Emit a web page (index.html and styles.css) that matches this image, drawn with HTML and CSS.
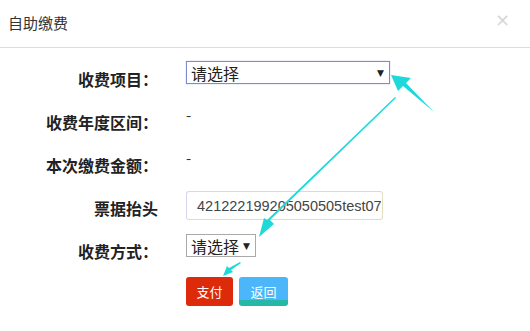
FILE: index.html
```html
<!DOCTYPE html>
<html lang="zh-CN">
<head>
    <meta charset="UTF-8">
    <title>自助缴费</title>
    <link rel="stylesheet" href="styles.css">
</head>
<body>
    <div class="dialog">
        <div class="dialog-header">
            <span class="dialog-title">自助缴费</span>
            <span class="dialog-close">&times;</span>
        </div>
        <div class="dialog-body">
            <div class="form-row">
                <label class="form-label">收费项目：</label>
                <div class="form-field">
                    <div class="select select-wide"><span>请选择</span><i class="caret">&#9660;</i></div>
                </div>
            </div>
            <div class="form-row">
                <label class="form-label">收费年度区间：</label>
                <div class="form-field"><span class="value">-</span></div>
            </div>
            <div class="form-row">
                <label class="form-label">本次缴费金额：</label>
                <div class="form-field"><span class="value">-</span></div>
            </div>
            <div class="form-row">
                <label class="form-label">票据抬头</label>
                <div class="form-field">
                    <input type="text" class="text-input" value="421222199205050505test072">
                </div>
            </div>
            <div class="form-row">
                <label class="form-label">收费方式：</label>
                <div class="form-field">
                    <div class="select select-small"><span>请选择</span><i class="caret">&#9660;</i></div>
                </div>
            </div>
            <div class="form-row buttons">
                <div class="form-label"></div>
                <div class="form-field">
                    <button class="btn btn-pay">支付</button>
                    <button class="btn btn-back">返回</button>
                </div>
            </div>
        </div>

        <!-- annotation arrows -->
        <svg class="arrows" width="530" height="331" viewBox="0 0 530 331">
            <polygon points="391,75 411,78 406,83 434,112 403,86 398,91" fill="#1fd9d9"/>
            <polygon points="395,97 396,98 270,220 274,224 259,237 264,218 267,220" fill="#1fd9d9"/>
            <polygon points="240,262 241,263 231,270 233,272 223,276 227,266 229,268" fill="#1fd9d9"/>
        </svg>
    </div>
</body>
</html>
```

FILE: styles.css
```css
body {
    margin: 0;
    background: #fff;
    font-family: "Noto Sans CJK SC", "Noto Sans", sans-serif;
    color: #222;
}

.dialog {
    position: relative;
    width: 530px;
    height: 331px;
    overflow: hidden;
}

.dialog-header {
    display: flex;
    justify-content: space-between;
    align-items: center;
    height: 48px;
    padding: 0 20px 0 8px;
    border-bottom: 1px solid #d8d8fb;
    box-sizing: border-box;
}

.dialog-title {
    font-size: 15px;
    color: #333;
    margin-top: -2px;
}

.dialog-close {
    font-size: 18px;
    color: #d6d6d6;
    font-family: "DejaVu Sans", sans-serif;
    margin-top: -8px;
}

.dialog-body {
    padding-top: 13px;
}

.form-row {
    display: flex;
    height: 43px;
}

.form-label {
    width: 158px;
    flex: none;
    text-align: right;
    font-size: 16px;
    font-weight: bold;
    line-height: 20px;
    padding-top: 8px;
    color: #222;
}

.form-field {
    margin-left: 28px;
    font-size: 15px;
}

.value {
    display: block;
    line-height: 20px;
    padding-top: 1px;
    color: #333;
}

.select {
    display: flex;
    align-items: center;
    justify-content: space-between;
    height: 23px;
    box-sizing: border-box;
    padding: 0 5px 0 4px;
    font-size: 16px;
    color: #222;
    background: #fff;
}

.select-wide {
    width: 204px;
    border: 1px solid #7b8ccf;
    box-shadow: 0 0 1px #9aa6e0;
}

.select-small {
    width: 70px;
    margin-top: 1px;
    border: 1px solid #a9a9a9;
}

.caret {
    font-style: normal;
    font-size: 9px;
    color: #222;
    font-family: "DejaVu Sans", sans-serif;
}

.text-input {
    width: 197px;
    height: 29px;
    margin-top: 1px;
    box-sizing: border-box;
    border: 1px solid #d6d6f0;
    border-bottom-color: #e0e0b8;
    border-right-color: #e0e0c0;
    border-radius: 3px;
    padding: 0 1px 0 10px;
    font-family: "Liberation Sans", sans-serif;
    font-size: 14.5px;
    color: #444;
    outline: none;
}

.buttons .form-field {
    display: flex;
    gap: 6px;
    margin-top: 1px;
}

.btn {
    height: 29px;
    border: none;
    border-radius: 3px;
    color: #fff;
    font-family: "Noto Sans CJK SC", sans-serif;
    font-size: 13px;
    padding: 0;
    cursor: pointer;
}

.btn-pay {
    width: 47px;
    background: #dc2a0a;
}

.btn-back {
    width: 49px;
    background: linear-gradient(#4cb6fa 0, #4cb6fa 80%, #25b7a8 80%);
}

.arrows {
    position: absolute;
    left: 0;
    top: 0;
    pointer-events: none;
}
```
